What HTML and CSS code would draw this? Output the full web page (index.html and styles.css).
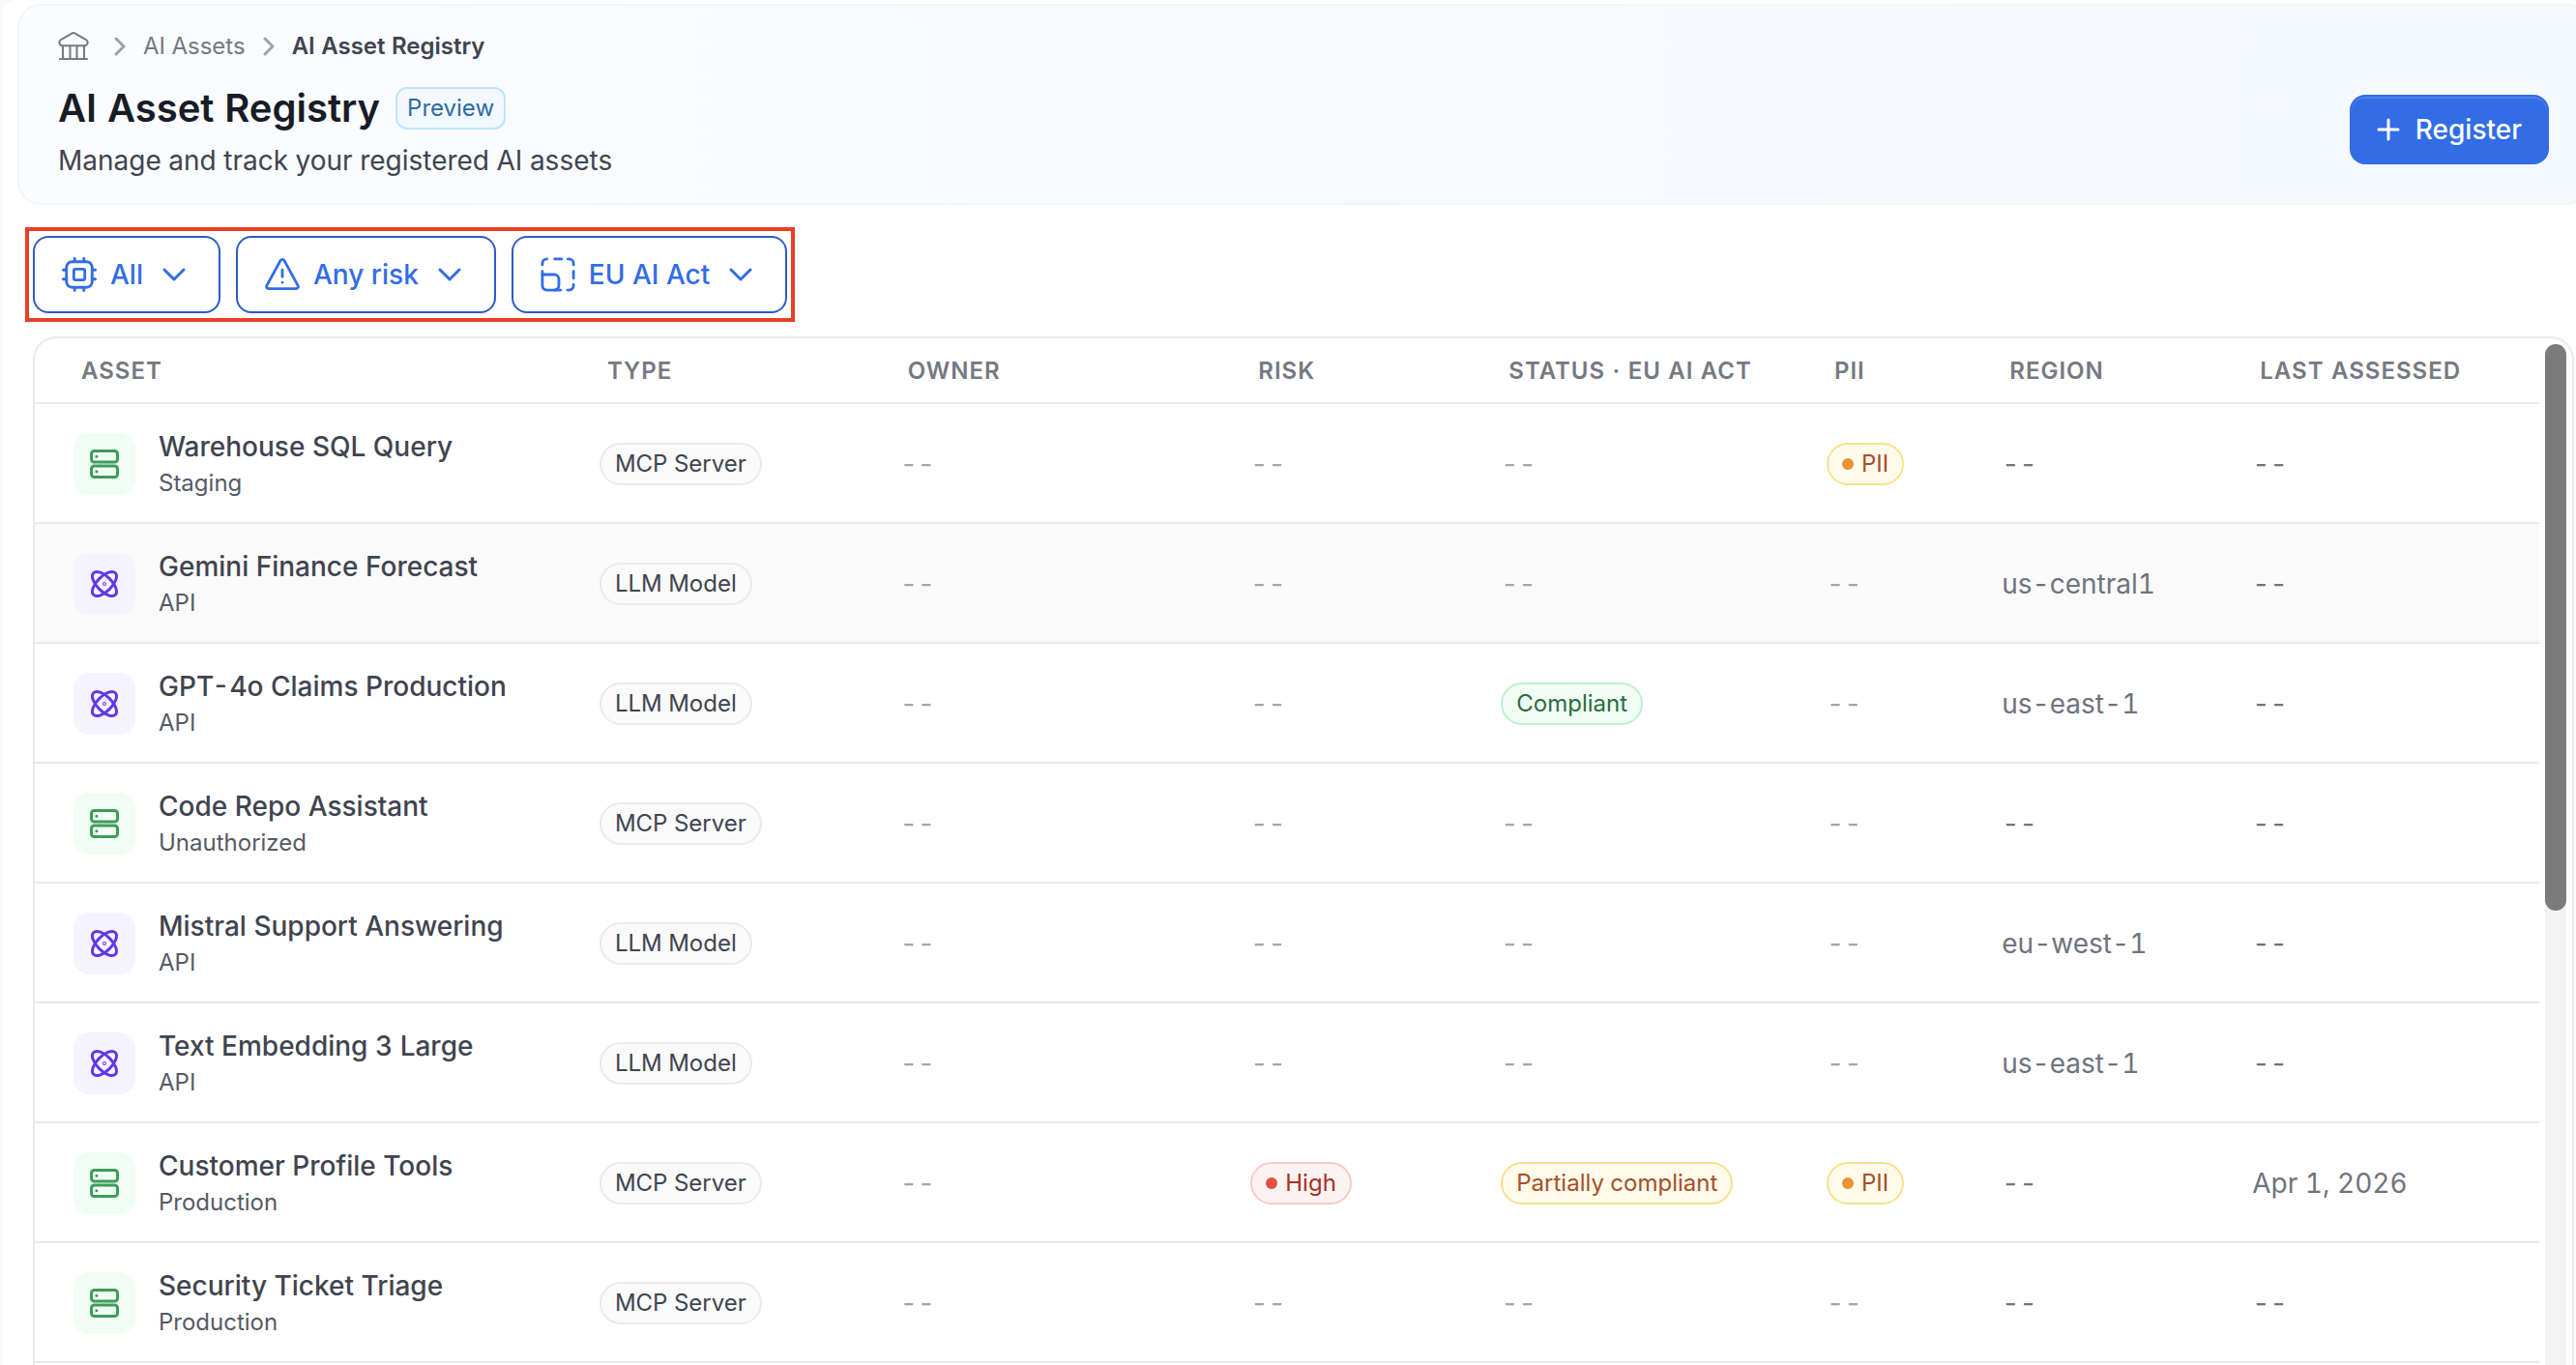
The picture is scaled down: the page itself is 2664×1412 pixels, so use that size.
FILE: index.html
```html
<!DOCTYPE html>
<html lang="en">
<head>
    <meta charset="UTF-8">
    <title>AI Asset Registry</title>
    <link rel="stylesheet" href="styles.css">
</head>
<body>

<svg class="sprite" aria-hidden="true">
    <symbol id="icon-server" viewBox="0 0 32 32">
        <rect x="2.5" y="2.5" width="27" height="11.5" rx="3"/>
        <rect x="2.5" y="18" width="27" height="11.5" rx="3"/>
        <path d="M7.8 8.2h.1M7.8 23.8h.1"/>
    </symbol>
    <symbol id="icon-model" viewBox="0 0 32 32">
        <ellipse cx="16" cy="16" rx="16" ry="7.6" transform="rotate(45 16 16)"/>
        <ellipse cx="16" cy="16" rx="16" ry="7.6" transform="rotate(-45 16 16)"/>
        <circle cx="16" cy="16" r="0.5"/>
    </symbol>
    <symbol id="icon-down" viewBox="0 0 24 14">
        <path d="M2 2l10 10L22 2"/>
    </symbol>
    <symbol id="icon-right" viewBox="0 0 12 20">
        <path d="M2 2l8 8-8 8"/>
    </symbol>
</svg>

<main class="page">
    <header class="page-header">
        <div>
            <nav class="breadcrumb">
                <a href="#" aria-label="Home">
                    <svg class="home-icon" viewBox="0 0 32 30">
                        <path d="M13.8 1.8a4 4 0 0 1 4.4 0L29 8.2a3.2 3.2 0 0 1-1.6 6H4.6A3.2 3.2 0 0 1 3 8.2z"/>
                        <path d="M5 14.5V28M12.5 14.5V28M19.5 14.5V28M27 14.5V28M2 28h28"/>
                    </svg>
                </a>
                <svg class="separator"><use href="#icon-right"/></svg>
                <a href="#">AI Assets</a>
                <svg class="separator"><use href="#icon-right"/></svg>
                <span class="current">AI Asset Registry</span>
            </nav>
            <div class="title-row">
                <h1>AI Asset Registry</h1>
                <span class="preview">Preview</span>
            </div>
            <p class="subtitle">Manage and track your registered AI assets</p>
        </div>
        <button class="register">
            <svg viewBox="0 0 24 24"><path d="M12 2v20M2 12h20"/></svg>
            Register
        </button>
    </header>

    <div class="filters">
        <button class="filter">
            <svg class="filter-icon" viewBox="0 0 38 38">
                <rect x="5" y="5" width="28" height="28" rx="6"/>
                <rect x="13" y="13" width="12" height="12" rx="2"/>
                <path d="M14 1.5v3M24 1.5v3M14 33.5v3M24 33.5v3M1.5 14h3M1.5 24h3M33.5 14h3M33.5 24h3"/>
            </svg>
            All
            <svg class="chevron"><use href="#icon-down"/></svg>
        </button>
        <button class="filter">
            <svg class="filter-icon" viewBox="0 0 38 38">
                <path d="M17 3.6a2.3 2.3 0 0 1 4 0l15 27.4a2.3 2.3 0 0 1-2 3.4H4a2.3 2.3 0 0 1-2-3.4z"/>
                <path d="M19 14v7.5M19 27.5v.1"/>
            </svg>
            Any risk
            <svg class="chevron"><use href="#icon-down"/></svg>
        </button>
        <button class="filter">
            <svg class="filter-icon" viewBox="0 0 38 38">
                <path d="M2 8.5V7a5 5 0 0 1 5-5M15.5 2H23M30 2h1a5 5 0 0 1 5 5v1.5M36 15.5V23M36 30v1a5 5 0 0 1-5 5h-1.5M22 36H7a5 5 0 0 1-5-5V15.5"/>
                <path d="M2 19h13a5 5 0 0 1 5 5v7a5 5 0 0 1-5 5"/>
            </svg>
            EU AI Act
            <svg class="chevron"><use href="#icon-down"/></svg>
        </button>
    </div>

    <div class="table-card">
        <table id="assetTable">
            <thead>
                <tr>
                    <th class="col-asset">Asset</th>
                    <th class="col-type">Type</th>
                    <th class="col-owner">Owner</th>
                    <th class="col-risk">Risk</th>
                    <th class="col-status">Status · EU AI Act</th>
                    <th class="col-pii">PII</th>
                    <th class="col-region">Region</th>
                    <th class="col-assessed">Last assessed</th>
                </tr>
            </thead>
            <tbody></tbody>
        </table>
        <div class="scrollbar"><div class="thumb"></div></div>
    </div>
</main>

<script>
const assets = [
    { name: "Warehouse SQL Query", env: "Staging", type: "MCP Server", pii: true },
    { name: "Gemini Finance Forecast", env: "API", type: "LLM Model", region: "us-central1", active: true },
    { name: "GPT-4o Claims Production", env: "API", type: "LLM Model", status: "Compliant", region: "us-east-1" },
    { name: "Code Repo Assistant", env: "Unauthorized", type: "MCP Server" },
    { name: "Mistral Support Answering", env: "API", type: "LLM Model", region: "eu-west-1" },
    { name: "Text Embedding 3 Large", env: "API", type: "LLM Model", region: "us-east-1" },
    { name: "Customer Profile Tools", env: "Production", type: "MCP Server", risk: "High", status: "Partially compliant", pii: true, assessed: "Apr 1, 2026" },
    { name: "Security Ticket Triage", env: "Production", type: "MCP Server" }
];

const none = '<span class="none">--</span>';

function badge(text, color, dot) {
    return `<span class="badge ${color}">${dot ? '<i class="dot"></i>' : ""}${text}</span>`;
}

function loadAssets() {
    const tbody = document.querySelector("#assetTable tbody");
    assets.forEach(a => {
        const kind = a.type === "MCP Server" ? "server" : "model";
        const row = document.createElement("tr");
        if (a.active) row.className = "active";
        row.innerHTML = `
            <td>
                <div class="asset">
                    <span class="tile ${kind}"><svg><use href="#icon-${kind}"/></svg></span>
                    <div>
                        <div class="name">${a.name}</div>
                        <div class="env">${a.env}</div>
                    </div>
                </div>
            </td>
            <td>${badge(a.type, "gray")}</td>
            <td>${none}</td>
            <td>${a.risk ? badge(a.risk, "red", true) : none}</td>
            <td>${a.status ? badge(a.status, a.status === "Compliant" ? "green" : "amber") : none}</td>
            <td>${a.pii ? badge("PII", "amber", true) : none}</td>
            <td>${a.region || "--"}</td>
            <td>${a.assessed || "--"}</td>
        `;
        tbody.appendChild(row);
    });
}

loadAssets();
</script>

</body>
</html>
```
FILE: styles.css
```css
* {
    box-sizing: border-box;
}
body {
    margin: 0;
    height: 100vh;
    overflow: hidden;
    background: #f8f8ff;
    color: #40444f;
    font-family: Inter, "Liberation Sans", sans-serif;
    font-size: 28px;
    line-height: 40px;
    font-variant-numeric: tabular-nums;
}
button {
    font: inherit;
    font-weight: 500;
    cursor: pointer;
}
svg {
    flex: none;
    fill: none;
    stroke: currentColor;
    stroke-width: 3;
    stroke-linecap: round;
    stroke-linejoin: round;
}
.sprite {
    display: none;
}
.page {
    display: flex;
    flex-direction: column;
    height: 100vh;
    margin-left: 2px;
    padding-top: 4px;
    background: #fff;
    border-top-left-radius: 16px;
}

/* header */
.page-header {
    display: flex;
    justify-content: space-between;
    align-items: center;
    height: 208px;
    margin: 0 -14px 0 16px;
    padding: 2px 40px 0;
    border: 2px solid #eff7fe;
    border-radius: 24px;
    background: linear-gradient(90deg, #fbfcff, #f8fbff 30%, #f4f9fe);
}
.breadcrumb {
    display: flex;
    align-items: center;
    gap: 18px;
    height: 32px;
    margin-bottom: 24px;
    font-size: 24px;
}
.breadcrumb a {
    display: flex;
    color: #757982;
    text-decoration: none;
}
.breadcrumb .current {
    color: #40444f;
    font-weight: 600;
}
.home-icon {
    width: 32px;
    height: 30px;
    margin-right: 8px;
    stroke-width: 2;
}
.separator {
    width: 12px;
    height: 20px;
    color: #9fa2a9;
}
.title-row {
    display: flex;
    align-items: center;
    gap: 16px;
    height: 48px;
}
h1 {
    margin: 0;
    color: #181c26;
    font-size: 40px;
    font-weight: 600;
}
.preview {
    padding: 0 10px;
    border: 2px solid #bfe4fc;
    border-radius: 12px;
    background: #f1f8fe;
    color: #2e6aa5;
    font-size: 24px;
}
.subtitle {
    margin: 10px 0 0;
}
.register {
    display: flex;
    align-items: center;
    gap: 16px;
    height: 72px;
    margin-top: 50px;
    padding: 0 26px;
    border: 2px solid #326de6;
    border-radius: 16px;
    background: #326de6;
    box-shadow: inset 0 2px 0 #4b7feb;
    color: #fff;
}
.register svg {
    width: 24px;
    height: 24px;
}

/* filters */
.filters {
    display: flex;
    align-self: flex-start;
    gap: 16px;
    margin: 23px 0 15px 24px;
    padding: 5px 4px;
    border: 4px solid #e83f25;
}
.filter {
    display: flex;
    align-items: center;
    height: 80px;
    padding: 0 34px 0 28px;
    border: 2px solid #2c5bcb;
    border-radius: 16px;
    background: #fff;
    color: #326de6;
}
.filter-icon {
    width: 36px;
    height: 36px;
    margin-right: 14px;
}
.chevron {
    width: 24px;
    height: 14px;
    margin-left: 20px;
}

/* table */
.table-card {
    display: flex;
    flex: 1;
    min-height: 0;
    margin: 0 2px 0 32px;
    border: 2px solid #e8ecf1;
    border-bottom: 0;
    border-radius: 24px 24px 0 0;
    overflow: hidden;
}
table {
    flex: 1;
    align-self: flex-start;
    table-layout: fixed;
    border-collapse: separate;
    border-spacing: 0;
}
th, td {
    padding: 2px 0 0 40px;
    border-bottom: 2px solid #e8e9ea;
    text-align: left;
    white-space: nowrap;
}
th {
    height: 68px;
    padding-left: 48px;
    color: #757982;
    font-size: 24px;
    font-weight: 600;
    letter-spacing: 1px;
    text-transform: uppercase;
}
td {
    height: 124px;
    color: #6f737e;
}
tr.active td {
    background: #fafafa;
}
.col-asset { width: 21%; }
.col-type { width: 12%; }
.col-owner { width: 14%; }
.col-risk { width: 10%; }
.col-status { width: 13%; }
.col-pii { width: 7%; }
.col-region { width: 10%; }
.col-assessed { width: 13%; }

.asset {
    display: flex;
    align-items: center;
    gap: 24px;
}
.tile {
    display: flex;
    align-items: center;
    justify-content: center;
    width: 64px;
    height: 64px;
    border-radius: 16px;
}
.tile svg {
    width: 32px;
    height: 32px;
}
.tile.server {
    background: #effdf4;
    color: #3f9a5a;
}
.tile.model {
    background: #f5f3ff;
    color: #6339e4;
}
.name {
    color: #40444f;
    font-weight: 500;
}
.env {
    color: #565a64;
    font-size: 24px;
    line-height: 36px;
}
.none {
    color: #a3a6af;
}
.badge {
    display: inline-flex;
    align-items: center;
    height: 44px;
    padding: 0 14px;
    border: 2px solid;
    border-radius: 22px;
    font-size: 24px;
    vertical-align: middle;
}
.gray {
    border-color: #e9eaeb;
    background: #fafafa;
    color: #40444f;
}
.red {
    border-color: #f6cbc9;
    background: #fdf2f2;
    color: #a4312a;
}
.green {
    border-color: #bdf1cf;
    background: #effdf4;
    color: #2c6b43;
}
.amber {
    border-color: #fae08c;
    background: #fefbeb;
    color: #a64f27;
}
.dot {
    width: 12px;
    height: 12px;
    margin-right: 8px;
    border-radius: 50%;
}
.red .dot {
    background: #e05142;
}
.amber .dot {
    background: #ea9333;
}

.scrollbar {
    width: 22px;
    margin: 6px 6px 0;
    border-radius: 11px 11px 0 0;
    background: #f3f3f3;
}
.thumb {
    height: 55.5%;
    border-radius: 11px;
    background: #7b7b7b;
}
```
